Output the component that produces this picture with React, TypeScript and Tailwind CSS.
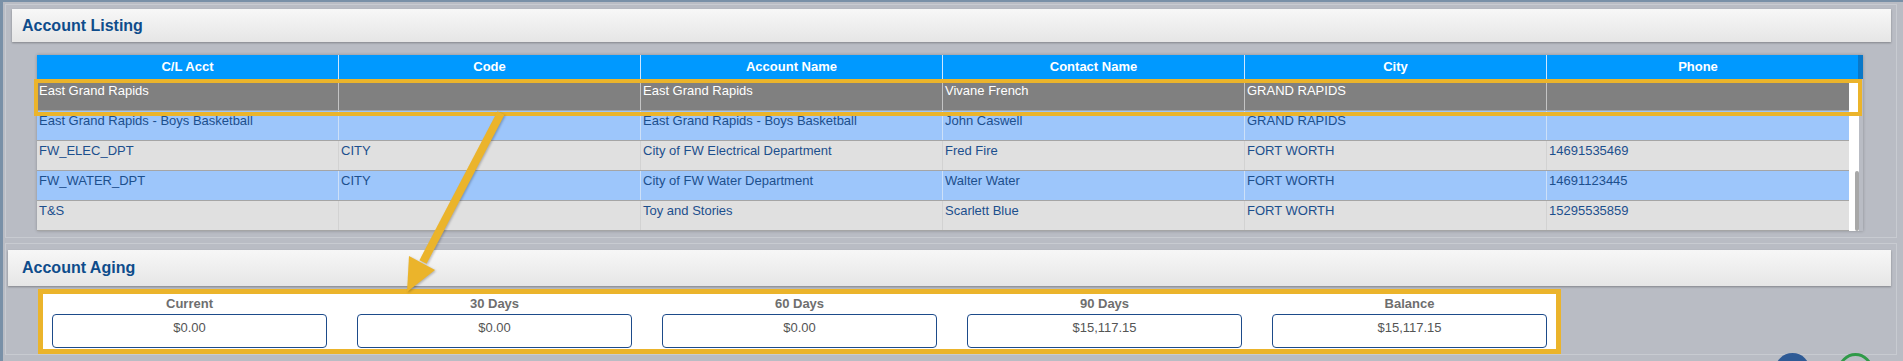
import React from "react";

const columns = ["C/L Acct", "Code", "Account Name", "Contact Name", "City", "Phone"];

const rows = [
  ["East Grand Rapids", "", "East Grand Rapids", "Vivane French", "GRAND RAPIDS", ""],
  ["East Grand Rapids - Boys Basketball", "", "East Grand Rapids - Boys Basketball", "John Caswell", "GRAND RAPIDS", ""],
  ["FW_ELEC_DPT", "CITY", "City of FW Electrical Department", "Fred Fire", "FORT WORTH", "14691535469"],
  ["FW_WATER_DPT", "CITY", "City of FW Water Department", "Walter Water", "FORT WORTH", "14691123445"],
  ["T&S", "", "Toy and Stories", "Scarlett Blue", "FORT WORTH", "15295535859"],
];

const aging = [
  { label: "Current", value: "$0.00" },
  { label: "30 Days", value: "$0.00" },
  { label: "60 Days", value: "$0.00" },
  { label: "90 Days", value: "$15,117.15" },
  { label: "Balance", value: "$15,117.15" },
];

const rowStyles = [
  "h-[32px] pt-[2px] bg-[#808080] text-white",
  "h-[30px] bg-[#9dc6fb] text-[#1c4f8d]",
  "h-[30px] bg-[#e0e0e0] text-[#1c4f8d]",
  "h-[30px] bg-[#9dc6fb] text-[#1c4f8d]",
  "h-[30px] bg-[#e0e0e0] text-[#1c4f8d]",
];

const sepStyles = [
  "border-[#c4c4c4]",
  "border-[#cde0f8]",
  "border-[#d2d2d2]",
  "border-[#cde0f8]",
  "border-[#d2d2d2]",
];

const SectionBar = ({ title, className }: { title: string; className: string }) => (
  <div
    className={`flex items-center bg-gradient-to-b from-[#f7f7f7] to-[#e6e6e6] shadow-[0_1px_2px_rgba(0,0,0,0.3)] ${className}`}
  >
    <span className="text-[16px] font-bold text-[#0e4c8b]">{title}</span>
  </div>
);

const App = () => {
  return (
    <div className="relative w-[1903px] h-[361px] overflow-hidden font-['Liberation_Sans',Arial,sans-serif]">
      <div className="w-[1903px] h-[361px] bg-[#b9bcc4] border-t-2 border-l-[3px] border-[#7990a7]">
        {/* Account Listing */}
        <div className="ml-[2px] mt-[2px] w-[1892px] h-[234px] border border-[#c8cbd1]">
          <SectionBar title="Account Listing" className="ml-[6px] mt-[4px] w-[1879px] h-[33px] pl-[10px]" />

          <div className="ml-[31px] mt-[13px] w-[1826px] shadow-[0_0_3px_rgba(0,0,0,0.25)]">
            <div className="flex h-[24px] bg-[#0099ff]">
              {columns.map((c, i) => (
                <div
                  key={c}
                  className={`w-[302px] shrink-0 text-center text-[13px] leading-[24px] font-bold text-white ${
                    i < 5 ? "border-r border-[#cde6ff]" : ""
                  }`}
                >
                  {c}
                </div>
              ))}
              <div className="w-[9px] shrink-0" />
              <div className="w-[5px] shrink-0 bg-[#0a78c8]" />
            </div>

            <div className="flex">
              <div className="w-[1812px] shrink-0">
                {rows.map((r, ri) => (
                  <div key={ri} className={`flex border-b border-[#a5a5a5] ${rowStyles[ri]}`}>
                    {r.map((cell, ci) => (
                      <div
                        key={ci}
                        className={`w-[302px] shrink-0 px-[2px] pt-[2px] text-[13px] leading-[16px] whitespace-nowrap ${
                          ci < 5 ? `border-r ${sepStyles[ri]}` : ""
                        }`}
                      >
                        {cell}
                      </div>
                    ))}
                  </div>
                ))}
              </div>
              <div className="flex w-[10px] shrink-0">
                <div className="w-[6px] bg-white" />
                <div className="flex w-[4px] flex-col bg-white">
                  <div className="h-[92px]" />
                  <div className="h-[60px] w-[4px] rounded-sm bg-[#a8a8a8]" />
                </div>
              </div>
            </div>
          </div>
        </div>

        {/* Account Aging */}
        <div className="ml-[2px] mt-[5px] w-[1892px] h-[112px] border border-[#c8cbd1]">
          <SectionBar title="Account Aging" className="ml-[2px] mt-[6px] w-[1883px] h-[36px] pl-[14px]" />

          <div className="ml-[32px] mt-[3px] w-[1523px] h-[65px] bg-white border-[5px] border-[#ebb42b] px-[9px]">
            <div className="flex gap-[30px]">
              {aging.map((a) => (
                <div key={a.label} className="w-[275px] shrink-0">
                  <div className="h-[20px] text-center text-[13px] leading-[20px] font-bold text-[#6e6e6e]">
                    {a.label}
                  </div>
                  <div className="h-[34px] rounded-[4px] border border-[#1d4b8a] pt-[5px] text-center text-[13px] leading-[16px] text-[#555555]">
                    {a.value}
                  </div>
                </div>
              ))}
            </div>
          </div>
        </div>
      </div>

      {/* highlight around selected row */}
      <div className="absolute left-[34px] top-[79px] w-[1828px] h-[37px] border-[4px] border-[#ebb42b] pointer-events-none" />

      {/* pointer arrow */}
      <svg
        className="absolute left-0 top-0 pointer-events-none drop-shadow-[1px_1px_1px_rgba(0,0,0,0.25)]"
        width="1903"
        height="361"
        viewBox="0 0 1903 361"
      >
        <line x1="501" y1="113" x2="423" y2="262" stroke="#ebb42b" strokeWidth="8" />
        <polygon points="407,292 409,256 435,270" fill="#ebb42b" />
      </svg>

      {/* partially visible round buttons */}
      <div className="absolute left-[1775px] top-[353px] w-[35px] h-[35px] rounded-full bg-[#1f4f90] opacity-90" />
      <div className="absolute left-[1838px] top-[353px] w-[35px] h-[35px] rounded-full border-[3px] border-[#2f9a48]" />
    </div>
  );
};

export default App;
